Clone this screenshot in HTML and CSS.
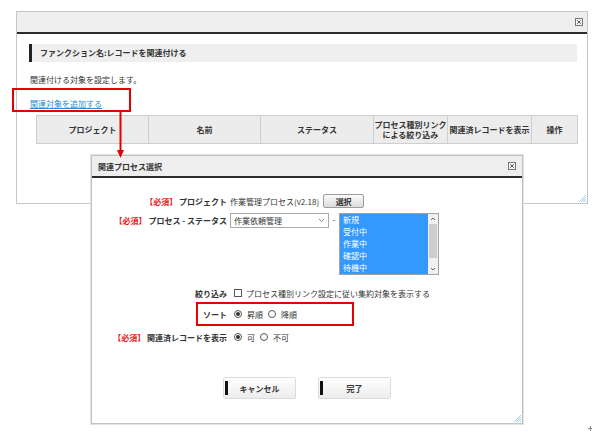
FILE: index.html
```html
<!DOCTYPE html>
<html lang="ja">
<head>
<meta charset="utf-8">
<title>関連プロセス選択</title>
<link rel="stylesheet" href="styles.css">
</head>
<body>
<div class="stage">
  <div class="dlg outer">
    <div class="dlg-head outer-head">
      <span class="close"><svg width="8" height="8" viewBox="0 0 8 8"><rect x="0.5" y="0.5" width="7" height="7" fill="#f4f4f4" stroke="#777"/><path d="M2.3 2.3 L5.7 5.7 M5.7 2.3 L2.3 5.7" stroke="#555" stroke-width="1"/></svg></span>
    </div>
    <div class="outer-body">
      <div class="section-title">ファンクション名:レコードを関連付ける</div>
      <p class="desc">関連付ける対象を設定します。</p>
      <a class="add-link" href="#">関連対象を追加する</a>
      <table class="rel-table">
        <colgroup>
          <col class="c1"><col class="c2"><col class="c3"><col class="c4"><col class="c5"><col class="c6">
        </colgroup>
        <thead>
          <tr>
            <th>プロジェクト</th>
            <th>名前</th>
            <th>ステータス</th>
            <th>プロセス種別リンク<br>による絞り込み</th>
            <th>関連済レコードを表示</th>
            <th>操作</th>
          </tr>
        </thead>
      </table>
    </div>
    <span class="grip"><svg width="8" height="8" viewBox="0 0 8 8"><path d="M8 1 L1 8 M8 3 L3 8 M8 5 L5 8 M8 7 L7 8" stroke="#8fc3ea" stroke-width="0.8"/></svg></span>
  </div>

  <div class="dlg inner">
    <div class="dlg-head inner-head">
      <span class="dlg-title">関連プロセス選択</span>
      <span class="close"><svg width="8" height="8" viewBox="0 0 8 8"><rect x="0.5" y="0.5" width="7" height="7" fill="#f4f4f4" stroke="#777"/><path d="M2.3 2.3 L5.7 5.7 M5.7 2.3 L2.3 5.7" stroke="#555" stroke-width="1"/></svg></span>
    </div>
    <div class="inner-body">
      <div class="row row-project">
        <div class="lbl"><span class="req">【必須】</span> プロジェクト</div>
        <div class="val">
          <span>作業管理プロセス(v2.18)</span>
          <button class="sel-btn" type="button">選択</button>
        </div>
      </div>
      <div class="row row-status">
        <div class="lbl"><span class="req">【必須】</span> プロセス - ステータス</div>
        <div class="val">
          <div class="select">
            <span>作業依頼管理</span>
            <svg class="chev" width="7" height="5" viewBox="0 0 7 5"><path d="M1 1 L3.5 3.5 L6 1" fill="none" stroke="#777" stroke-width="0.9"/></svg>
          </div>
          <span class="dash">-</span>
          <div class="listbox">
            <ul class="opts">
              <li>新規</li>
              <li>受付中</li>
              <li>作業中</li>
              <li>確認中</li>
              <li>待機中</li>
            </ul>
            <div class="sbar">
              <svg width="10" height="10" viewBox="0 0 10 10"><path d="M3 6 L5 4 L7 6" fill="none" stroke="#666" stroke-width="1"/></svg>
              <div class="thumb"></div>
              <svg class="sdown" width="10" height="10" viewBox="0 0 10 10"><path d="M3 4 L5 6 L7 4" fill="none" stroke="#666" stroke-width="1"/></svg>
            </div>
          </div>
        </div>
      </div>
      <div class="row row-filter">
        <div class="lbl">絞り込み</div>
        <div class="val">
          <span class="chk"></span>
          <span class="opt-text">プロセス種別リンク設定に従い集約対象を表示する</span>
        </div>
      </div>
      <div class="row row-sort">
        <div class="lbl">ソート</div>
        <div class="val">
          <span class="radio on"></span><span class="opt-text">昇順</span>
          <span class="radio"></span><span class="opt-text">降順</span>
        </div>
      </div>
      <div class="row row-show">
        <div class="lbl"><span class="req">【必須】</span> 関連済レコードを表示</div>
        <div class="val">
          <span class="radio on"></span><span class="opt-text">可</span>
          <span class="radio"></span><span class="opt-text">不可</span>
        </div>
      </div>
      <div class="actions">
        <button class="act-btn" type="button">キャンセル</button>
        <button class="act-btn" type="button">完了</button>
      </div>
    </div>
    <span class="grip"><svg width="8" height="8" viewBox="0 0 8 8"><path d="M8 1 L1 8 M8 3 L3 8 M8 5 L5 8 M8 7 L7 8" stroke="#8fc3ea" stroke-width="0.8"/></svg></span>
  </div>

  <div class="mark mark-link"></div>
  <div class="mark mark-sort"></div>
  <svg class="arrow" width="9" height="46" viewBox="0 0 9 46"><path d="M4.5 0 L4.5 39" stroke="#e60000" stroke-width="2"/><polygon points="1,38 8,38 4.5,46" fill="#e60000"/></svg>
  <svg class="plus" width="5" height="5" viewBox="0 0 5 5"><path d="M2.5 0 V5 M0 2.5 H5" stroke="#888" stroke-width="1"/></svg>
</div>
</body>
</html>
```

FILE: styles.css
```css
* { box-sizing: border-box; }
html, body { margin: 0; padding: 0; }
body {
  width: 592px;
  height: 431px;
  overflow: hidden;
  background: #fff;
  font-family: "Noto Sans CJK JP", "Noto Sans", sans-serif;
  font-size: 8px;
  color: #333;
}
.stage {
  position: relative;
  width: 592px;
  height: 431px;
  padding: 11px 4px 0 16px;
}

/* dialogs */
.dlg { background: #fff; }
.outer {
  position: relative;
  width: 572px;
  height: 193px;
  border: 1px solid #c6c6c6;
}
.dlg-head {
  display: flex;
  align-items: center;
  background: #eeeeee;
  border-bottom: 2px solid #2b2b2b;
}
.outer-head {
  height: 22px;
  justify-content: flex-end;
  padding-right: 4px;
}
.close { display: flex; }
.grip {
  position: absolute;
  right: 1px;
  bottom: 1px;
  display: flex;
}

.outer-body { padding: 10px 10px 0 12px; }
.section-title {
  height: 18px;
  line-height: 18px;
  background: #efefef;
  border-left: 3px solid #222;
  padding-left: 8px;
  font-weight: bold;
}
.desc {
  margin: 12px 0 0 1px;
  line-height: 12px;
}
.add-link {
  display: inline-block;
  margin: 12px 0 0 1px;
  line-height: 12px;
  color: #2b8ad6;
  text-decoration: underline;
}
.rel-table {
  margin: 5px 0 0 7px;
  width: 541px;
  border-collapse: collapse;
  table-layout: fixed;
}
.c1 { width: 112px; }
.c2 { width: 112px; }
.c3 { width: 113px; }
.c4 { width: 74px; }
.c5 { width: 84px; }
.c6 { width: 46px; }
.rel-table th {
  height: 28px;
  padding: 0;
  background: #ececec;
  border: 1px solid #cfcfcf;
  font-weight: bold;
  line-height: 10px;
  text-align: center;
  color: #333;
}

/* inner dialog */
.inner {
  position: absolute;
  left: 91px;
  top: 155px;
  width: 432px;
  height: 269px;
  border: 1px solid #c2c2c2;
  box-shadow: 0 0 0 1px #e2e2e2;
}
.inner-head {
  height: 22px;
  justify-content: space-between;
  padding: 0 6px 0 6px;
}
.dlg-title { font-weight: bold; }

.inner-body { padding-top: 15px; }
.row { display: flex; align-items: center; }
.lbl {
  width: 135px;
  flex: none;
  text-align: right;
  font-weight: bold;
  white-space: nowrap;
}
.req { color: #e8141c; }
.val {
  margin-left: 3px;
  display: flex;
  align-items: center;
  white-space: nowrap;
}

.row-project { height: 16px; }
.sel-btn {
  margin-left: 4px;
  width: 41px;
  height: 14px;
  padding: 0;
  border: 1px solid #9c9c9c;
  border-radius: 2px;
  background: linear-gradient(#fbfbfb, #dcdcdc);
  font: bold 8px "Noto Sans CJK JP", sans-serif;
  color: #333;
}

.row-status { margin-top: 4px; align-items: flex-start; }
.row-status .lbl { line-height: 15px; }
.row-status .val { align-items: flex-start; }
.select {
  width: 99px;
  height: 15px;
  border: 1px solid #a9a9a9;
  display: flex;
  align-items: center;
  justify-content: space-between;
  padding: 0 3px 0 3px;
  background: #fff;
}
.dash {
  width: 10px;
  text-align: center;
  line-height: 13px;
}
.listbox {
  width: 100px;
  height: 62px;
  border: 1px solid #a3a3a3;
  display: flex;
}
.opts {
  flex: 1;
  margin: 0;
  padding: 0 0 0 3px;
  list-style: none;
  background: #3399ff;
  color: #fff;
  line-height: 12px;
}
.sbar {
  width: 10px;
  background: #f0f0f0;
  display: flex;
  flex-direction: column;
}
.thumb {
  height: 34px;
  margin: 0 1px;
  background: #cdcdcd;
}
.sdown { margin-top: auto; }

.row-filter { margin-top: 11px; height: 14px; }
.row-sort { margin-top: 7px; height: 14px; }
.row-show { margin-top: 9px; height: 14px; }
.chk {
  width: 8px;
  height: 8px;
  margin-left: 4px;
  border: 1px solid #555;
  background: #fff;
}
.opt-text { margin-left: 5px; }
.row-filter .opt-text { margin-left: 4px; }
.radio {
  width: 8px;
  height: 8px;
  border: 1px solid #555;
  border-radius: 50%;
  margin-left: 5px;
  display: flex;
  align-items: center;
  justify-content: center;
}
.val .radio:first-child { margin-left: 4px; }
.radio.on::after {
  content: "";
  width: 4px;
  height: 4px;
  border-radius: 50%;
  background: #333;
}

.actions {
  margin-top: 33px;
  display: flex;
  justify-content: center;
  gap: 22px;
}
.act-btn {
  position: relative;
  width: 73px;
  height: 22px;
  padding: 0;
  border: 1px solid #dcdcdc;
  border-radius: 2px;
  background: linear-gradient(#ffffff, #ececec);
  font: bold 8px "Noto Sans CJK JP", sans-serif;
  color: #333;
}
.act-btn::before {
  content: "";
  position: absolute;
  left: 1px;
  top: 3px;
  bottom: 3px;
  width: 3px;
  background: #111;
}

/* annotations */
.mark {
  position: absolute;
  border: 2px solid #e60000;
}
.mark-link { left: 12px; top: 88px; width: 119px; height: 24px; }
.mark-sort { left: 196px; top: 302px; width: 158px; height: 24px; }
.arrow { position: absolute; left: 116px; top: 112px; }
.plus { position: absolute; left: 588px; top: 426px; }
```
